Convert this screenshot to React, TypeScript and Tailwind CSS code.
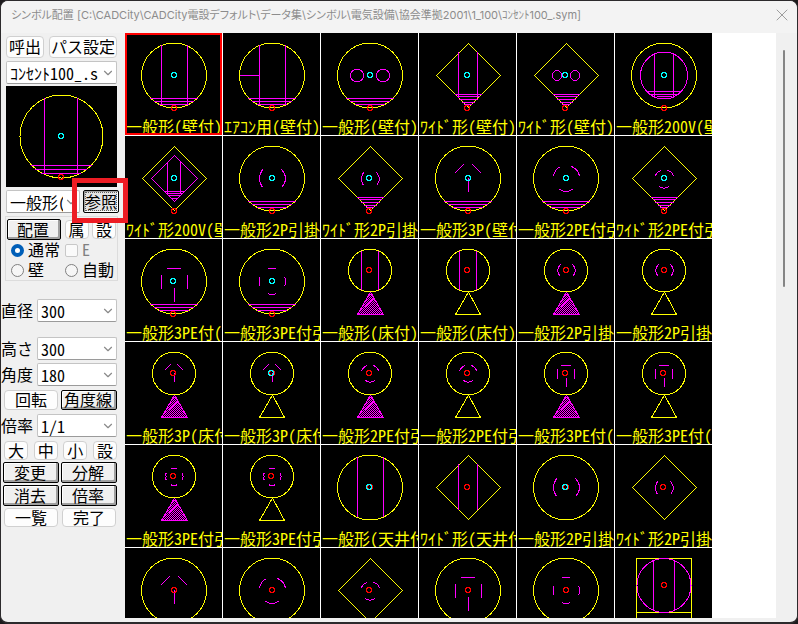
import { useState } from 'react'
import type { ReactNode } from 'react'
import { ChevronDown, X } from 'lucide-react'

type Frame = 'circle' | 'diamond' | 'floor' | 'floorFill' | 'square'
type Pin = [x: number, y: number, color: string]

interface Sym {
  label: string
  frame: Frame
  mark: string
  wall?: boolean
  pins: Pin[]
}

const CYAN = '#00ffff'
const RED = '#ff0000'
const MAGENTA = '#ff00ff'
const YELLOW = '#ffff00'

const FRAMES: Record<Frame, string> = {
  circle: 'M16.5 42.5a32.5 32.5 0 1 0 65 0a32.5 32.5 0 1 0 -65 0',
  diamond: 'M49.5 10.5L81.5 42.5L49.5 74.5L17.5 42.5Z',
  floor: 'M27.5 31.5a21.5 21.5 0 1 0 43 0a21.5 21.5 0 1 0 -43 0M49.5 53L36.5 75.5H61.5Z',
  floorFill: 'M27.5 31.5a21.5 21.5 0 1 0 43 0a21.5 21.5 0 1 0 -43 0',
  square: 'M21.5 102V10.5H76.5V102M21.5 64.5H76.5',
}

// floor lines that mark a wall mounted outlet
const WALL: Partial<Record<Frame, string>> = {
  circle: 'M25 65.5H73M29 68.5H69M34 71.5H64',
  diamond: 'M36 61.5H63M38 63.5H61M40 66.5H59M43 69.5H56M45 71.5H53',
}

const MARKS: Record<string, string> = {
  bars: 'M36.5 12V72M62.5 12V72',
  aircon: 'M36.5 12V72M62.5 12V72M17 42.5H36',
  holes: 'M29.5 42.5a6.5 6.5 0 1 0 13 0a6.5 6.5 0 1 0 -13 0M55.5 42.5a6.5 6.5 0 1 0 13 0a6.5 6.5 0 1 0 -13 0',
  wideBars: 'M39.5 19V65M58.5 19V65',
  wideHoles: 'M35.5 42.5a4.5 5 0 1 0 9 0a4.5 5 0 1 0 -9 0M53.5 42.5a4.5 5 0 1 0 9 0a4.5 5 0 1 0 -9 0',
  v200: 'M25.5 42.5a23.5 23.5 0 1 0 47 0a23.5 23.5 0 1 0 -47 0M39.5 21V64M58.5 21V64M33 58.5H67M36 61.5H63M42 63.5H57',
  wide200: 'M49.5 19.5L72.5 42.5L49.5 65.5L26.5 42.5ZM42.5 26V58M55.5 26V58M39 55.5H60M42 57.5H57M44 59.5H55M47 62.5H52',
  twist: 'M39.5 33.5Q33.5 42.5 39.5 51.5M58.5 33.5Q66.5 42.5 58.5 51.5',
  wideTwist: 'M42.5 36.5Q38.5 43 42.5 49.5M55.5 36.5Q61.5 43 55.5 49.5',
  p3: 'M35.5 37.5L44.5 28.5M53.5 28.5L62.5 37.5M49.5 42V56',
  pe2: 'M36.5 40Q38 33 43.5 30.5M54.5 30.5Q61 33 62.5 40M42 53Q49 58 56 53',
  widePe2: 'M40.5 40.5Q41 36 46 34.5M52.5 34.5Q58 36 58.5 40.5M44 50.5Q49 54 54 50.5',
  pe3: 'M42 29.5H56M36.5 36V50M62.5 36V50M49.5 49V63',
  pe3Twist: 'M45 29.5H53M36.5 38V47M61.5 38L62.5 40V45L61.5 47M45 54.5L47 55.5H51L53 54.5',
  floorBars: 'M40.5 12V51M57.5 12V51',
  floorTwist: 'M43.5 25.5L41.5 28L40.5 31.5L41.5 35L43.5 37.5M55.5 25.5L57.5 28L58.5 31.5L57.5 35L55.5 37.5',
  floorP3: 'M39.5 28.5L45.5 22.5M52.5 22.5L58.5 28.5M49.5 31V40',
  floorPe2: 'M40.5 29.5Q42 25 46 23.5M52.5 23.5Q57 25 57.5 29.5M44.5 38.5Q49 42 54 38.5',
  floorPe3: 'M44 23.5H54M40.5 27V37M57.5 27V37M49.5 36V45',
  floorPe3Twist: 'M46 23.5H52M41.5 28L40.5 29V30L41.5 31.5L40.5 33V34L41.5 35M57.5 28V30L58.5 31.5L57.5 33V35M46 39.5L47 40.5H51L52 39.5',
  ceilSquare: 'M22 37.5a27 27 0 1 0 54 0a27 27 0 1 0 -54 0M38.5 12V62M59.5 12V62',
}

const wallPins = (x: number): Pin[] => [[x, 42, CYAN], [x, 75, RED]]
const both = (x: number, y: number): Pin[] => [[x + 1, y, RED], [x, y, CYAN]]

const SYMBOLS: Sym[] = [
  { label: '一般形(壁付)', frame: 'circle', mark: 'bars', wall: true, pins: wallPins(49) },
  { label: 'ｴｱｺﾝ用(壁付)', frame: 'circle', mark: 'aircon', wall: true, pins: [[49, 75, RED]] },
  { label: '一般形(壁付)', frame: 'circle', mark: 'holes', wall: true, pins: wallPins(49) },
  { label: 'ﾜｲﾄﾞ形(壁付)', frame: 'diamond', mark: 'wideBars', wall: true, pins: wallPins(48) },
  { label: 'ﾜｲﾄﾞ形(壁付)', frame: 'diamond', mark: 'wideHoles', wall: true, pins: wallPins(48) },
  { label: '一般形200V(壁', frame: 'circle', mark: 'v200', pins: wallPins(49) },

  { label: 'ﾜｲﾄﾞ形200V(壁', frame: 'diamond', mark: 'wide200', pins: wallPins(49) },
  { label: '一般形2P引掛', frame: 'circle', mark: 'twist', wall: true, pins: wallPins(49) },
  { label: 'ﾜｲﾄﾞ形2P引掛', frame: 'diamond', mark: 'wideTwist', wall: true, pins: wallPins(48) },
  { label: '一般形3P(壁付', frame: 'circle', mark: 'p3', wall: true, pins: wallPins(49) },
  { label: '一般形2PE付引', frame: 'circle', mark: 'pe2', wall: true, pins: wallPins(49) },
  { label: 'ﾜｲﾄﾞ形2PE付引', frame: 'diamond', mark: 'widePe2', wall: true, pins: wallPins(49) },

  { label: '一般形3PE付(', frame: 'circle', mark: 'pe3', wall: true, pins: wallPins(48) },
  { label: '一般形3PE付引', frame: 'circle', mark: 'pe3Twist', wall: true, pins: wallPins(49) },
  { label: '一般形(床付)', frame: 'floorFill', mark: 'floorBars', pins: [[48, 31, RED]] },
  { label: '一般形(床付)', frame: 'floor', mark: 'floorBars', pins: [[48, 31, RED]] },
  { label: '一般形2P引掛', frame: 'floorFill', mark: 'floorTwist', pins: [[49, 31, RED]] },
  { label: '一般形2P引掛', frame: 'floor', mark: 'floorTwist', pins: [[49, 31, RED]] },

  { label: '一般形3P(床付', frame: 'floorFill', mark: 'floorP3', pins: [[48, 31, RED]] },
  { label: '一般形3P(床付', frame: 'floor', mark: 'floorP3', pins: both(48, 31) },
  { label: '一般形2PE付引', frame: 'floorFill', mark: 'floorPe2', pins: [[48, 31, RED]] },
  { label: '一般形2PE付引', frame: 'floor', mark: 'floorPe2', pins: [[48, 31, RED]] },
  { label: '一般形3PE付(', frame: 'floorFill', mark: 'floorPe3', pins: [[48, 31, RED]] },
  { label: '一般形3PE付(', frame: 'floor', mark: 'floorPe3', pins: [[48, 31, RED]] },

  { label: '一般形3PE付引', frame: 'floorFill', mark: 'floorPe3Twist', pins: [[48, 31, RED]] },
  { label: '一般形3PE付引', frame: 'floor', mark: 'floorPe3Twist', pins: [[48, 31, RED]] },
  { label: '一般形(天井付', frame: 'circle', mark: 'bars', pins: both(48, 42) },
  { label: 'ﾜｲﾄﾞ形(天井付', frame: 'diamond', mark: 'wideBars', pins: [[48, 42, RED]] },
  { label: '一般形2P引掛', frame: 'circle', mark: 'twist', pins: both(48, 42) },
  { label: 'ﾜｲﾄﾞ形2P引掛', frame: 'diamond', mark: 'wideTwist', pins: [[48, 42, RED]] },

  { label: '', frame: 'circle', mark: 'p3', pins: [[49, 42, RED]] },
  { label: '', frame: 'circle', mark: 'pe2', pins: [[49, 42, RED]] },
  { label: '', frame: 'diamond', mark: 'widePe2', pins: [[48, 42, RED]] },
  { label: '', frame: 'circle', mark: 'pe3', pins: [[49, 42, RED]] },
  { label: '', frame: 'circle', mark: 'pe3Twist', pins: [[49, 42, RED]] },
  { label: '', frame: 'square', mark: 'ceilSquare', pins: [[49, 37, RED]] },
]

function PinMark({ pin: [x, y, color] }: { pin: Pin }) {
  return <path d={`M${x - 1} ${y - 2.5}h2l1.5 1.5v2l-1.5 1.5h-2l-1.5 -1.5v-2z`} stroke={color} />
}

function SymbolDrawing({ sym }: { sym: Sym }) {
  return (
    <svg width="97" height="102" viewBox="0 0 97 102" fill="none" shapeRendering="crispEdges" className="block">
      {sym.frame === 'floorFill' && (
        <>
          <path d="M49.5 53L36.5 75.5H62.5Z" fill="url(#hatch)" stroke={MAGENTA} />
          <path d="M39 72L53 59" stroke={MAGENTA} />
        </>
      )}
      <path d={FRAMES[sym.frame]} stroke={YELLOW} />
      {sym.wall && <path d={WALL[sym.frame]} stroke={MAGENTA} />}
      <path d={MARKS[sym.mark]} stroke={MAGENTA} />
      {sym.pins.map((p, i) => <PinMark key={i} pin={p} />)}
    </svg>
  )
}

function FlatButton({ children, className = '' }: { children: ReactNode; className?: string }) {
  return (
    <button className={`flex items-center justify-center rounded-sm border border-[#d0d0d0] bg-[#fdfdfd] pb-0.5 leading-none whitespace-nowrap ${className}`}>
      {children}
    </button>
  )
}

function RaisedButton({ children, className = '' }: { children: ReactNode; className?: string }) {
  return (
    <button
      className={`flex items-center justify-center rounded-xs border border-black bg-[#f0f0f0] pr-0.5 pb-0.5 leading-none whitespace-nowrap shadow-[inset_-2px_-2px_0_#a0a0a0,inset_1px_1px_0_#ffffff] ${className}`}
    >
      {children}
    </button>
  )
}

function Combo({ label, value, className = '' }: { label: string; value: string; className?: string }) {
  return (
    <div className={`relative ${className}`}>
      <select
        aria-label={label}
        defaultValue={value}
        className="block h-full w-full appearance-none overflow-hidden rounded-xs border border-[#c4c4c4] border-b-[#9a9a9a] bg-white pr-4 pl-[3px] leading-5"
      >
        <option>{value}</option>
      </select>
      <ChevronDown size={14} strokeWidth={2} className="pointer-events-none absolute top-1/2 right-0.5 -translate-y-1/2 text-[#8a8a8a]" />
    </div>
  )
}

function Field({ label, value, className = '' }: { label: string; value: string; className?: string }) {
  return (
    <div className={`flex h-[23px] items-center justify-between ${className}`}>
      <span className="pb-0.5 leading-none">{label}</span>
      <Combo label={label} value={value} className="h-full w-20" />
    </div>
  )
}

function Radio({ label, checked = false }: { label: string; checked?: boolean }) {
  return (
    <label className="flex items-center gap-1 leading-none whitespace-nowrap">
      <input
        type="radio"
        name="mode"
        defaultChecked={checked}
        className="size-[13px] shrink-0 appearance-none rounded-full border border-[#808080] bg-[#f6f6f6] checked:border-4 checked:border-[#005fb8] checked:bg-white"
      />
      <span className="pb-0.5">{label}</span>
    </label>
  )
}

function SidePanel() {
  return (
    <aside className="w-[124px] shrink-0 pt-[3px] pr-2">
      <div className="ml-[5px] flex h-[22px] justify-between">
        <FlatButton className="w-[38px]">呼出</FlatButton>
        <FlatButton className="w-[68px]">パス設定</FlatButton>
      </div>
      <Combo label="シンボルファイル" value="ｺﾝｾﾝﾄ100_.s" className="mt-[3px] ml-[5px] h-[23px]" />

      {/* Preview of the selected symbol */}
      <div className="mt-0.5 ml-[5px] bg-black">
        <svg width="111" height="101" viewBox="0 0 111 101" fill="none" shapeRendering="crispEdges" className="block">
          <circle cx="55.5" cy="50.5" r="41.5" stroke={YELLOW} />
          <path d="M38.5 12V88M71.5 12V88M25 79.5H86M29 83.5H81M35 87.5H75" stroke={MAGENTA} />
          <PinMark pin={[55, 50, CYAN]} />
          <PinMark pin={[55, 91, RED]} />
        </svg>
      </div>

      <div className="relative mt-[3px] -mr-0.5 ml-[5px] flex h-[23px] justify-between">
        <Combo label="シンボル" value="一般形(壁付)" className="w-[74px]" />
        <button className="flex w-9 items-center justify-center rounded-xs border border-black bg-[#e4e4e4] p-px leading-none whitespace-nowrap shadow-[inset_1px_1px_0_#a0a0a0,inset_-1px_-1px_0_#ffffff]">
          <span className="flex h-full w-full items-center justify-center border border-dotted border-[#606060] pb-0.5">参照</span>
        </button>
        <div className="pointer-events-none absolute -top-3 -right-[9px] z-10 h-[45px] w-14 border-[5px] border-[#ed1c24]" />
      </div>

      <div className="mt-[3px] -mr-px ml-1 h-[65px] border border-[#dcdcdc] px-px pt-0.5">
        <div className="flex h-[21px] items-center justify-between">
          <RaisedButton className="h-[21px] w-[54px]">配置</RaisedButton>
          <FlatButton className="h-[19px] w-6">属</FlatButton>
          <FlatButton className="h-[19px] w-6">設</FlatButton>
        </div>
        <div className="grid h-[40px] grid-cols-[54px_1fr] items-center pl-1">
          <Radio label="通常" checked />
          <label className="flex items-center gap-1 leading-none text-[#808080]">
            <input type="checkbox" disabled className="size-[13px] appearance-none rounded-xs border border-[#c8c8c8] bg-[#fafafa]" />
            <span className="pb-0.5">E</span>
          </label>
          <Radio label="壁" />
          <Radio label="自動" />
        </div>
      </div>

      <Field label="直径" value="300" className="mt-[18px]" />
      <Field label="高さ" value="300" className="mt-[15px]" />
      <Field label="角度" value="180" className="mt-[3px]" />
      <div className="mt-1 ml-[3px] flex h-5 justify-between">
        <FlatButton className="w-[54px]">回転</FlatButton>
        <RaisedButton className="w-14">角度線</RaisedButton>
      </div>
      <Field label="倍率" value="1/1" className="mt-1" />
      <div className="mt-1 ml-[3px] flex h-[19px] justify-between">
        <FlatButton className="w-6">大</FlatButton>
        <FlatButton className="w-6">中</FlatButton>
        <FlatButton className="w-6">小</FlatButton>
        <FlatButton className="w-6">設</FlatButton>
      </div>
      <div className="mt-0.5 ml-0.5 grid grid-cols-2 gap-0.5">
        <RaisedButton className="h-[21px]">変更</RaisedButton>
        <RaisedButton className="h-[21px]">分解</RaisedButton>
        <RaisedButton className="h-[21px]">消去</RaisedButton>
        <RaisedButton className="h-[21px]">倍率</RaisedButton>
        <FlatButton className="mx-px h-[19px]">一覧</FlatButton>
        <FlatButton className="mx-px h-[19px]">完了</FlatButton>
      </div>
    </aside>
  )
}

export default function App() {
  const [selected, setSelected] = useState(0)

  return (
    <div className="h-screen bg-[#1c1a1c]">
      <div className="flex h-full flex-col overflow-hidden rounded-lg border border-b-2 border-[#2c2a2c] bg-[#f0f0f0] text-base text-black [font-family:'Noto_Sans_CJK_JP',sans-serif] [font-feature-settings:'hwid']">
        <header className="flex h-8 shrink-0 items-center justify-between bg-[#f3f3f3] pr-[5px] pb-1 pl-2.5 text-[11px] text-[#8c8c8c] [font-family:Inter,'Noto_Sans_CJK_JP',sans-serif]">
          <h1 className="whitespace-nowrap [font-feature-settings:'palt']">
            シンボル配置 [C:\CADCity\CADCity電設デフォルト\データ集\シンボル\電気設備\協会準拠2001\1_100\ｺﾝｾﾝﾄ100_.sym]
          </h1>
          <button aria-label="閉じる">
            <X size={20} strokeWidth={1} />
          </button>
        </header>

        <main className="flex min-h-0 flex-1 pb-1">
          <SidePanel />

          <div className="grid min-w-0 flex-1 auto-rows-[103px] grid-cols-[repeat(auto-fill,98px)] overflow-hidden bg-white">
            {SYMBOLS.map((s, i) => (
              <button
                key={i}
                aria-label={s.label || '天井付'}
                onClick={() => setSelected(i)}
                className="relative overflow-hidden border-r border-b border-white bg-black"
              >
                <SymbolDrawing sym={s} />
                <span className="absolute bottom-px left-px leading-none whitespace-nowrap text-[#ffff00]">{s.label}</span>
                {i === selected && <span className="absolute inset-0 border-2 border-[#ff0000]" />}
              </button>
            ))}
          </div>

          <div className="w-[21px] shrink-0 pt-[17px] pl-[7px]">
            <div className="h-[237px] w-0.5 rounded-full bg-[#858585]" />
          </div>
        </main>
      </div>

      <svg width="0" height="0" className="absolute">
        <pattern id="hatch" width="2" height="2" patternUnits="userSpaceOnUse">
          <path d="M0 0h1v1h-1zM1 1h1v1h-1z" fill={MAGENTA} />
        </pattern>
      </svg>
    </div>
  )
}
